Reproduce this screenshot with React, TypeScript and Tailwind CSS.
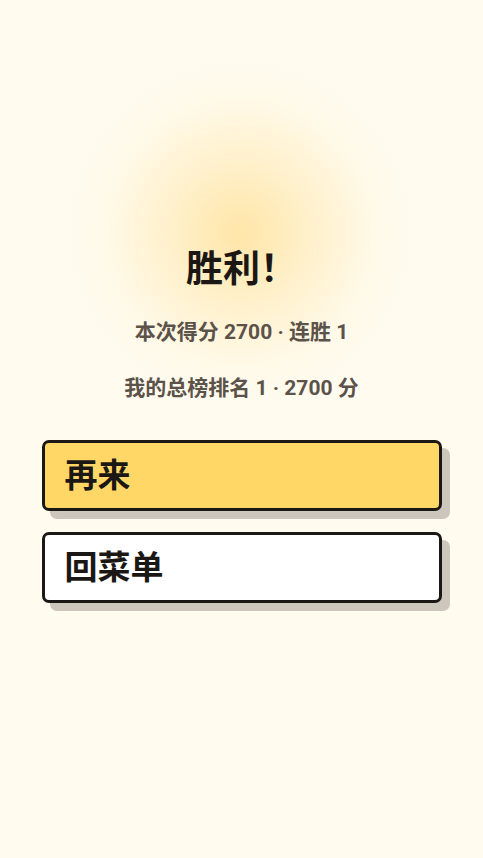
export default function App() {
  return (
    <div
      className="relative min-h-[858px] w-full overflow-hidden bg-[#fffbef]"
      style={{ fontFamily: 'Roboto, "Noto Sans CJK SC", sans-serif' }}
    >
      {/* glow behind the title */}
      <div className="pointer-events-none absolute left-[65px] top-[58px] h-[350px] w-[350px] rounded-full bg-[radial-gradient(circle,rgba(255,215,120,0.6)_0%,rgba(255,225,150,0.38)_30%,rgba(255,238,195,0.15)_55%,rgba(255,251,239,0)_72%)]" />

      <div className="relative flex flex-col items-center pt-[250px]">
        <h1 className="text-[37px] font-bold leading-[40px] text-[#1b1714]">胜利！</h1>
        <p className="mt-[27px] text-[21px] font-bold leading-[30px] text-[#5b524a]">本次得分 2700 · 连胜 1</p>
        <p className="mt-[26px] text-[21px] font-bold leading-[30px] text-[#5b524a]">我的总榜排名 1 · 2700 分</p>

        <div className="mt-[37px] flex w-[400px] flex-col gap-[21px]">
          <button className="flex h-[71px] items-center rounded-[7px] border-[3px] border-[#1a1714] bg-[#ffd766] px-[20px] text-[33px] font-bold text-[#1a1714] shadow-[8px_8px_0_#ccc6bc]">
            再来
          </button>
          <button className="flex h-[71px] items-center rounded-[7px] border-[3px] border-[#1a1714] bg-white px-[20px] text-[33px] font-bold text-[#1a1714] shadow-[8px_8px_0_#ccc6bc]">
            回菜单
          </button>
        </div>
      </div>
    </div>
  );
}
